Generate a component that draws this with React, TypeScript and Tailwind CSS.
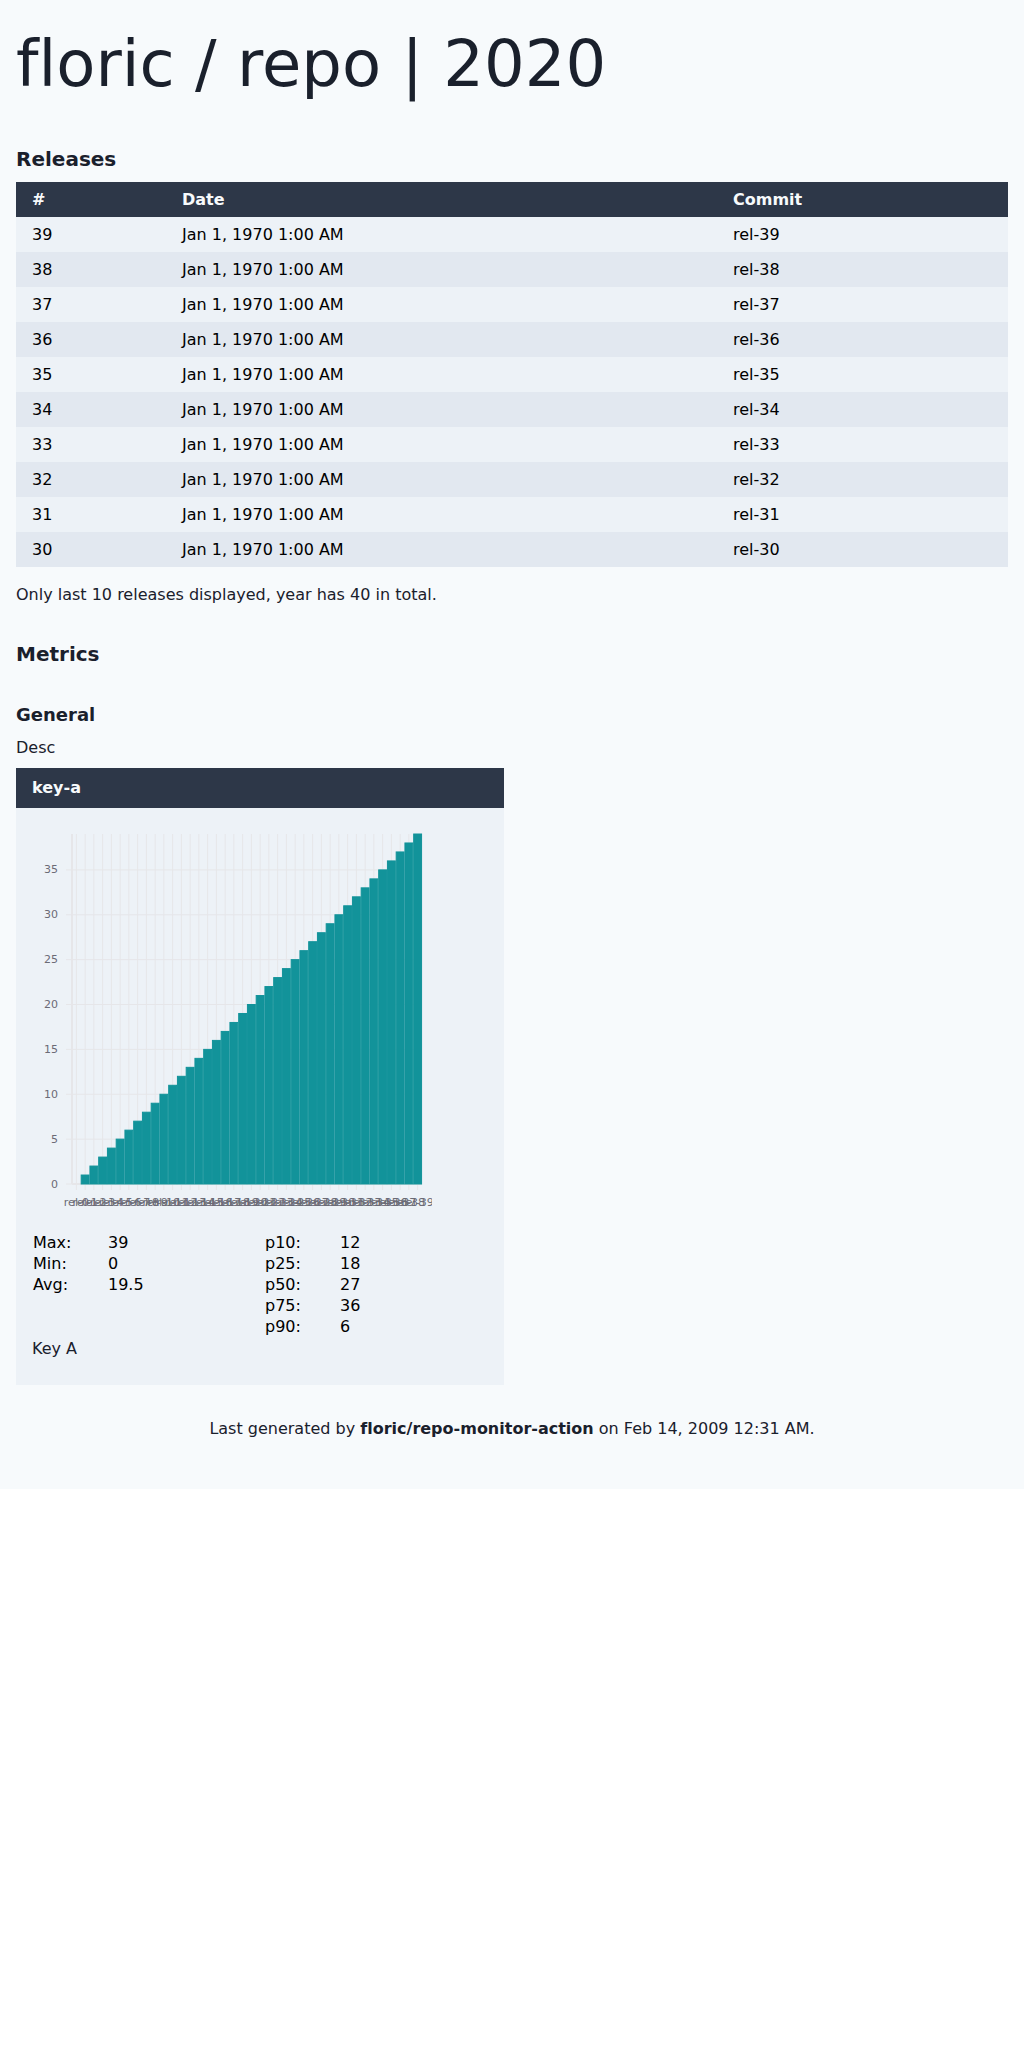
const releases = Array.from({ length: 10 }, (_, i) => 39 - i);
const values = Array.from({ length: 40 }, (_, i) => i);
const yTicks = [0, 5, 10, 15, 20, 25, 30, 35];

const SIZE = 350;
const BAND = SIZE / 40;
const BAR = BAND * 0.9;
const yOf = (v: number) => SIZE - (v * SIZE) / 39;

function BarChart() {
  return (
    <svg width="400" height="400" className="block overflow-hidden text-[11px]">
      <g transform="translate(40,10)">
        <g stroke="#e6e6e9">
          {values.map((v) => (
            <line key={v} x1={(v + 0.5) * BAND} x2={(v + 0.5) * BAND} y1={0} y2={SIZE} />
          ))}
          {yTicks.map((v) => (
            <line key={v} x1={0} x2={SIZE} y1={yOf(v)} y2={yOf(v)} />
          ))}
        </g>
        <g>
          <line x1={0} x2={SIZE} y1={SIZE} y2={SIZE} stroke="#e6e6e9" strokeWidth={2} />
          {values.map((v) => (
            <g key={v} transform={`translate(${(v + 0.5) * BAND},${SIZE})`}>
              <line y1={0} y2={6} stroke="#e6e6e9" />
              <text y={14} dy="0.72em" textAnchor="middle" fill="#6b6b76">{`rel-${v}`}</text>
            </g>
          ))}
        </g>
        <g>
          <line x1={0} x2={0} y1={0} y2={SIZE} stroke="#e6e6e9" strokeWidth={2} />
          {yTicks.map((v) => (
            <g key={v} transform={`translate(0,${yOf(v)})`}>
              <line x1={-6} x2={0} stroke="#e6e6e9" />
              <text x={-14} dy="0.32em" textAnchor="end" fill="#6b6b76">{v}</text>
            </g>
          ))}
        </g>
        <g fill="#12939a" stroke="#12939a">
          {values.slice(1).map((v) => (
            <rect key={v} x={(v + 0.5) * BAND - BAR / 2} y={yOf(v)} width={BAR} height={SIZE - yOf(v)} />
          ))}
        </g>
      </g>
    </svg>
  );
}

function Stats({ rows }: { rows: [string, string][] }) {
  return (
    <table className="w-full table-fixed self-start text-black">
      <tbody>
        {rows.map(([label, value]) => (
          <tr key={label}>
            <td className="w-[75px] p-px">{label}</td>
            <td className="p-px">{value}</td>
          </tr>
        ))}
      </tbody>
    </table>
  );
}

export default function App() {
  return (
    <div className="h-[1489px] bg-[#f7fafc] px-4 pt-[27px] font-['DejaVu_Sans',sans-serif] text-base leading-[normal] text-[#1a202c]">
      <h1 className="text-[64px] leading-[75px] [font-variant-ligatures:none]">floric / repo | 2020</h1>
      <h2 className="mt-[45px] text-xl leading-6 font-bold">Releases</h2>
      <table className="mt-[11px] w-full table-fixed border-collapse text-left">
        <colgroup>
          <col className="w-[150px]" />
          <col className="w-[551px]" />
          <col />
        </colgroup>
        <thead>
          <tr className="bg-[#2d3748] text-[#f7fafc]">
            <th className="px-4 py-2">#</th>
            <th className="px-4 py-2">Date</th>
            <th className="px-4 py-2">Commit</th>
          </tr>
        </thead>
        <tbody className="text-black">
          {releases.map((n) => (
            <tr key={n} className="bg-[#edf2f7] even:bg-[#e2e8f0]">
              <td className="px-4 py-2">{n}</td>
              <td className="px-4 py-2">Jan 1, 1970 1:00 AM</td>
              <td className="px-4 py-2">rel-{n}</td>
            </tr>
          ))}
        </tbody>
      </table>
      <p className="mt-[18px]">Only last 10 releases displayed, year has 40 in total.</p>
      <h2 className="mt-[38px] text-xl leading-6 font-bold">Metrics</h2>
      <h3 className="mt-[38px] text-lg leading-[21px] font-bold">General</h3>
      <p className="mt-[13px]">Desc</p>
      <section className="mt-[11px] w-[488px] bg-[#edf2f7]">
        <h4 className="h-10 bg-[#2d3748] px-4 leading-10 font-bold text-[#f7fafc]">key-a</h4>
        <div className="h-[577px] p-4">
          <BarChart />
          <div className="mt-2 grid grid-cols-2 gap-x-2">
            <Stats rows={[["Max:", "39"], ["Min:", "0"], ["Avg:", "19.5"]]} />
            <Stats rows={[["p10:", "12"], ["p25:", "18"], ["p50:", "27"], ["p75:", "36"], ["p90:", "6"]]} />
          </div>
          <p className="mt-0.5">Key A</p>
        </div>
      </section>
      <footer className="mt-[34px] text-center">
        Last generated by <b className="[font-variant-ligatures:none]">floric/repo-monitor-action</b> on Feb 14, 2009 12:31 AM.
      </footer>
    </div>
  );
}
